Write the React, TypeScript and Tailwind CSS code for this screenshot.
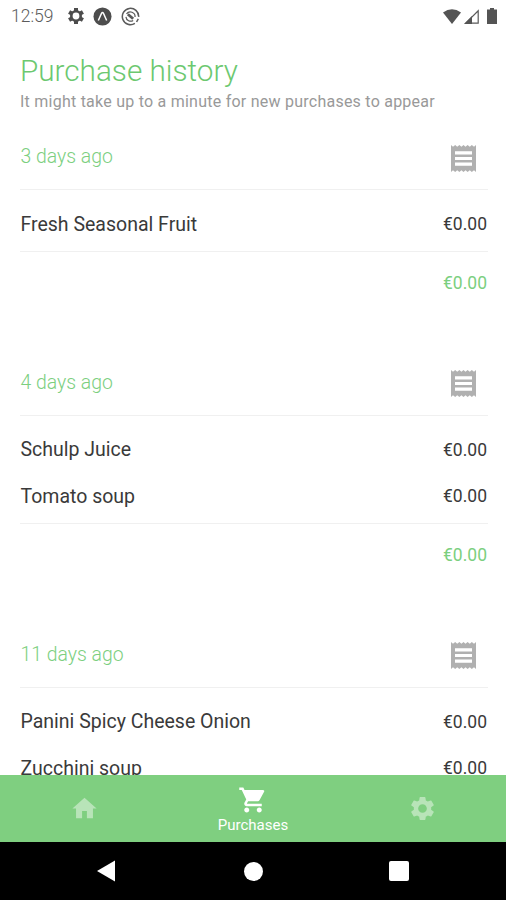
import { MdHome, MdSettings, MdShoppingCart } from 'react-icons/md'

type Purchase = {
  when: string
  items: { name: string; price: string }[]
  total: string
}

const PURCHASES: Purchase[] = [
  {
    when: '3 days ago',
    items: [{ name: 'Fresh Seasonal Fruit', price: '€0.00' }],
    total: '€0.00',
  },
  {
    when: '4 days ago',
    items: [
      { name: 'Schulp Juice', price: '€0.00' },
      { name: 'Tomato soup', price: '€0.00' },
    ],
    total: '€0.00',
  },
  {
    when: '11 days ago',
    items: [
      { name: 'Panini Spicy Cheese Onion', price: '€0.00' },
      { name: 'Zucchini soup', price: '€0.00' },
    ],
    total: '€0.00',
  },
]

const GEAR_TEETH = [0, 60, 120]

function StatusBar() {
  return (
    <div className="flex h-8 shrink-0 items-center pl-[11px] pr-[9px] text-[#5c5c5c]">
      <span className="w-[56px] text-[17.5px] font-light leading-8">12:59</span>
      <svg viewBox="0 0 18 18" className="size-[18px]" fill="none" stroke="#4d4d4d">
        {GEAR_TEETH.map(angle => (
          <path key={angle} d="M9 1V4.2M9 13.8V17" strokeWidth="4" transform={`rotate(${angle} 9 9)`} />
        ))}
        <circle cx="9" cy="9" r="4.7" strokeWidth="2.6" />
      </svg>
      <svg viewBox="0 0 20 20" className="ml-[8px] size-[19px]">
        <circle cx="10" cy="10" r="9.5" fill="#4d4d4d" />
        <path d="M5.6 14.2 9 6.6Q10 4.8 11 6.6L14.4 14.2" fill="none" stroke="#fff" strokeWidth="1.6" />
      </svg>
      <svg viewBox="0 0 20 20" className="ml-[9px] size-[19px]" fill="none" stroke="#5a5a5a">
        <path d="M14.6 17.3A8.6 8.6 0 1 1 18.6 10.4" strokeWidth="1.6" />
        <path d="M18.2 12.4 16.4 15.8" strokeWidth="1.6" />
        <path d="M5.8 7.2A5 5 0 0 1 14.8 10.6M5.2 10.4A5 5 0 0 0 12.8 14.2" strokeWidth="1.3" />
        <path d="M7.2 7.6 12.8 12.4" strokeWidth="3" />
      </svg>
      <svg viewBox="0 0 18 15" className="ml-auto h-[15px] w-[18px]">
        <path d="M0 3.4Q9-3 18 3.4L9 15Z" fill="#545454" />
      </svg>
      <svg viewBox="0 0 15 15" className="ml-[3px] size-[15px]">
        <path d="M1.8 14.2H14.2V1.8Z" fill="none" stroke="#5a5a5a" strokeWidth="1.2" />
        <path d="M0 15H8V7Z" fill="#545454" />
      </svg>
      <svg viewBox="0 0 10 16" className="ml-[8px] h-4 w-[10px]">
        <path d="M3 0h4v1.5h3V16H0V1.5h3z" fill="#545454" />
      </svg>
    </div>
  )
}

function ReceiptIcon() {
  return (
    <svg viewBox="0 0 25 27" className="h-[27px] w-[25px]">
      <path
        d="M0 0l2 1.8L4.2 0l2 1.8L8.4 0l2 1.8L12.5 0l2 1.8L16.6 0l2.2 1.8L20.8 0 23 1.8 25 0V27l-2-1.8L20.8 27l-2-1.8L16.6 27l-2-1.8L12.5 27l-2.1-1.8L8.4 27l-2.2-1.8L4.2 27 2 25.2 0 27Z"
        fill="#b0b0b0"
      />
      <path d="M4 7.9h17M4 13.5h17M4 19.1h17" stroke="#fff" strokeWidth="3.2" />
    </svg>
  )
}

function PurchaseGroup({ purchase }: { purchase: Purchase }) {
  return (
    <section className="mb-[35px]">
      <div className="flex h-[66px] items-center justify-between border-b border-[#f0f0f0] pr-[12px]">
        <h2 className="pl-[0.5px] pt-px text-[19.4px] font-light leading-[28px] text-[#7ccf7f]">{purchase.when}</h2>
        <div className="pt-[3px]">
          <ReceiptIcon />
        </div>
      </div>
      <ul className="border-b border-[#f0f0f0] pb-[3px] pt-[11px]">
        {purchase.items.map(item => (
          <li key={item.name} className="flex h-[46.5px] items-center justify-between text-[#3a3a3a]">
            <span className="pl-[0.5px] text-[19.5px]">{item.name}</span>
            <span className="pr-px text-[17.5px]">{item.price}</span>
          </li>
        ))}
      </ul>
      <p className="h-[63px] pr-px text-right text-[17.5px] leading-[63px] text-[#7ccf7f]">{purchase.total}</p>
    </section>
  )
}

function TabBar() {
  return (
    <nav className="grid h-[67px] shrink-0 grid-cols-3 bg-[#7fcf80] text-white">
      <div className="flex items-center justify-center pl-px">
        <MdHome size={29} className="text-[#b8e4b8]" />
      </div>
      <div className="flex flex-col items-center pt-[10px]">
        <MdShoppingCart size={30} className="ml-px" />
        <span className="text-[15px] leading-[21px]">Purchases</span>
      </div>
      <div className="flex items-center justify-center pl-[2px]">
        <MdSettings size={29} className="text-[#b8e4b8]" />
      </div>
    </nav>
  )
}

function SystemBar() {
  return (
    <div className="flex h-[58px] shrink-0 items-center justify-between bg-black px-[97px]">
      <svg viewBox="0 0 18 22" className="h-[22px] w-[18px]">
        <path d="M0 11 18 0.5V21.5Z" fill="#fff" />
      </svg>
      <span className="ml-[2px] size-[19px] rounded-full bg-white" />
      <span className="size-[20px] rounded-[2px] bg-white" />
    </div>
  )
}

export default function App() {
  return (
    <div className="flex h-[900px] w-[506px] flex-col overflow-hidden bg-white font-['Roboto',sans-serif]">
      <StatusBar />
      <main className="min-h-0 flex-1 overflow-hidden pl-[20px] pr-[18px]">
        <h1 className="mt-[21px] text-[29.7px] font-light leading-[36px] text-[#6cc870]">Purchase history</h1>
        <p className="mb-[10px] pt-px text-[16px] leading-[24px] tracking-[0.24px] text-[#999]">
          It might take up to a minute for new purchases to appear
        </p>
        {PURCHASES.map(purchase => (
          <PurchaseGroup key={purchase.when} purchase={purchase} />
        ))}
      </main>
      <TabBar />
      <SystemBar />
    </div>
  )
}
